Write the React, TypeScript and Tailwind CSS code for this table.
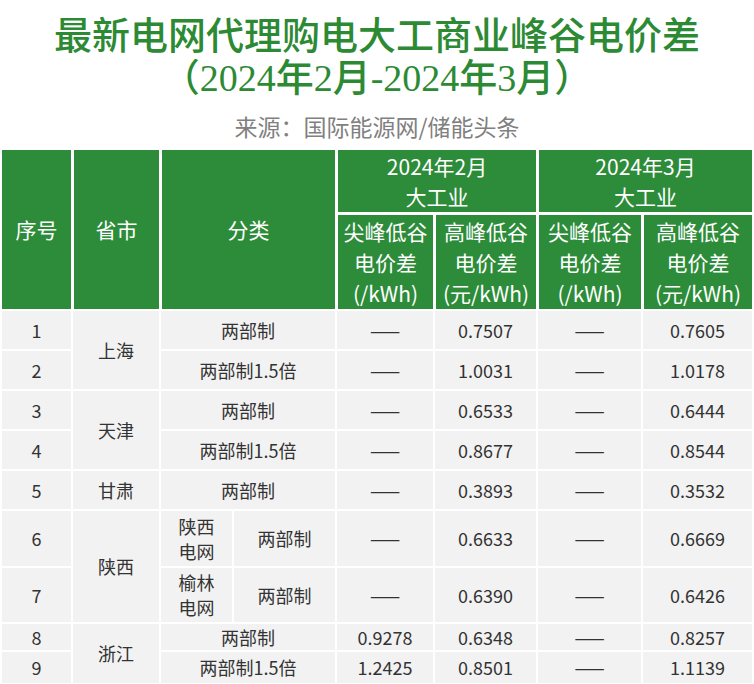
import React from "react";

const H = "bg-[#2d8c39] text-white flex flex-col items-center justify-center text-center text-[21px]";
const B = "bg-[#f2f2f2] text-[#333333] flex flex-col items-center justify-center text-center text-[18px]";

type Row = {
  n: string;
  cat?: string;
  sub?: [string, string];
  v: [string, string, string, string];
};

const rows: Row[] = [
  { n: "1", cat: "两部制", v: ["——", "0.7507", "——", "0.7605"] },
  { n: "2", cat: "两部制1.5倍", v: ["——", "1.0031", "——", "1.0178"] },
  { n: "3", cat: "两部制", v: ["——", "0.6533", "——", "0.6444"] },
  { n: "4", cat: "两部制1.5倍", v: ["——", "0.8677", "——", "0.8544"] },
  { n: "5", cat: "两部制", v: ["——", "0.3893", "——", "0.3532"] },
  { n: "6", sub: ["陕西|电网", "两部制"], v: ["——", "0.6633", "——", "0.6669"] },
  { n: "7", sub: ["榆林|电网", "两部制"], v: ["——", "0.6390", "——", "0.6426"] },
  { n: "8", cat: "两部制", v: ["0.9278", "0.6348", "——", "0.8257"] },
  { n: "9", cat: "两部制1.5倍", v: ["1.2425", "0.8501", "——", "1.1139"] },
];

const rowStart = [
  "row-start-1",
  "row-start-2",
  "row-start-3",
  "row-start-4",
  "row-start-5",
  "row-start-6",
  "row-start-7",
  "row-start-8",
  "row-start-9",
];

const colStart = ["col-start-4", "col-start-5", "col-start-6", "col-start-7"];

const provinces: { name: string; row: string; span: string }[] = [
  { name: "上海", row: "row-start-1", span: "row-span-2" },
  { name: "天津", row: "row-start-3", span: "row-span-2" },
  { name: "甘肃", row: "row-start-5", span: "row-span-1" },
  { name: "陕西", row: "row-start-6", span: "row-span-2" },
  { name: "浙江", row: "row-start-8", span: "row-span-2" },
];

export default function App() {
  return (
    <div
      className="w-[754px] h-[684px] bg-white overflow-hidden"
      style={{ fontFamily: '"Noto Sans CJK SC", "Noto Sans", sans-serif' }}
    >
      <div className="pt-[11px] text-center text-[#2d8a34] text-[38px] font-medium">
        <div className="leading-[43px] h-[43px]">最新电网代理购电大工商业峰谷电价差</div>
        <div
          className="leading-[43px] h-[43px] mt-[3px]"
          style={{ fontFamily: '"Liberation Serif", "Noto Sans CJK SC", serif' }}
        >
          （2024年2月-2024年3月）
        </div>
      </div>
      <div className="mt-[13px] text-center text-[#808080] text-[23px] leading-[26px] h-[26px]">
        来源：国际能源网/储能头条
      </div>

      {/* Header */}
      <div className="mt-[11px] ml-[2px] w-[750px] grid grid-cols-[69px_85px_173px_95px_100px_102px_108px] grid-rows-[62px_94px] gap-[3px]">
        <div className={`${H} col-start-1 row-start-1 row-span-2`}>序号</div>
        <div className={`${H} col-start-2 row-start-1 row-span-2`}>省市</div>
        <div className={`${H} col-start-3 row-start-1 row-span-2`}>分类</div>
        <div className={`${H} col-start-4 col-span-2 row-start-1 leading-[30px]`}>
          <div>2024年2月</div>
          <div>大工业</div>
        </div>
        <div className={`${H} col-start-6 col-span-2 row-start-1 leading-[30px]`}>
          <div>2024年3月</div>
          <div>大工业</div>
        </div>
        <div className={`${H} col-start-4 row-start-2 leading-[31px]`}>
          <div>尖峰低谷</div>
          <div>电价差</div>
          <div>(/kWh)</div>
        </div>
        <div className={`${H} col-start-5 row-start-2 leading-[31px]`}>
          <div>高峰低谷</div>
          <div>电价差</div>
          <div>(元/kWh)</div>
        </div>
        <div className={`${H} col-start-6 row-start-2 leading-[31px]`}>
          <div>尖峰低谷</div>
          <div>电价差</div>
          <div>(/kWh)</div>
        </div>
        <div className={`${H} col-start-7 row-start-2 leading-[31px]`}>
          <div>高峰低谷</div>
          <div>电价差</div>
          <div>(元/kWh)</div>
        </div>
      </div>

      {/* Body */}
      <div className="mt-[2px] ml-[2px] w-[750px] grid grid-cols-[69px_86px_174px_96px_101px_103px_109px] grid-rows-[38px_38px_38px_38px_38px_55px_54px_26px_31px] gap-[2px]">
        {rows.map((r, i) => (
          <React.Fragment key={r.n}>
            <div className={`${B} col-start-1 ${rowStart[i]}`}>{r.n}</div>
            {r.cat ? (
              <div className={`${B} col-start-3 ${rowStart[i]}`}>{r.cat}</div>
            ) : (
              <div className={`col-start-3 ${rowStart[i]} grid grid-cols-[71px_1fr] gap-[2px]`}>
                <div className={`${B} leading-[25px]`}>
                  {r.sub![0].split("|").map((t) => (
                    <div key={t}>{t}</div>
                  ))}
                </div>
                <div className={B}>{r.sub![1]}</div>
              </div>
            )}
            {r.v.map((v, j) => (
              <div key={j} className={`${B} ${colStart[j]} ${rowStart[i]}`}>
                {v}
              </div>
            ))}
          </React.Fragment>
        ))}
        {provinces.map((p) => (
          <div key={p.name} className={`${B} col-start-2 ${p.row} ${p.span}`}>
            {p.name}
          </div>
        ))}
      </div>
    </div>
  );
}
